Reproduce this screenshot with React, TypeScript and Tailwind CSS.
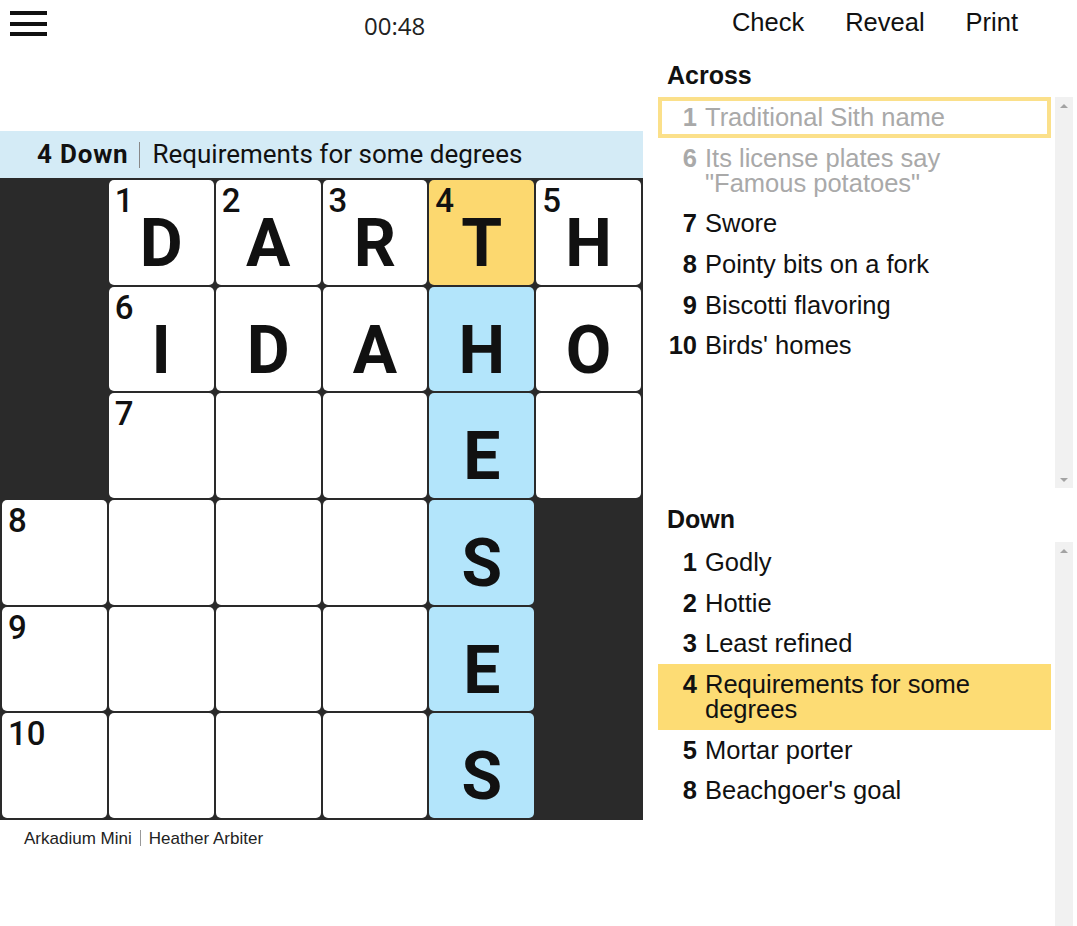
type Cell = null | { n?: number; l?: string; hl?: "y" | "b" };

const GRID: Cell[][] = [
  [null, { n: 1, l: "D" }, { n: 2, l: "A" }, { n: 3, l: "R" }, { n: 4, l: "T", hl: "y" }, { n: 5, l: "H" }],
  [null, { n: 6, l: "I" }, { l: "D" }, { l: "A" }, { l: "H", hl: "b" }, { l: "O" }],
  [null, { n: 7 }, {}, {}, { l: "E", hl: "b" }, {}],
  [{ n: 8 }, {}, {}, {}, { l: "S", hl: "b" }, null],
  [{ n: 9 }, {}, {}, {}, { l: "E", hl: "b" }, null],
  [{ n: 10 }, {}, {}, {}, { l: "S", hl: "b" }, null],
];

interface Clue {
  n: number;
  text: string;
  done?: boolean;
  active?: boolean;
  current?: boolean;
}

const ACROSS: Clue[] = [
  { n: 1, text: "Traditional Sith name", done: true, active: true },
  { n: 6, text: 'Its license plates say "Famous potatoes"', done: true },
  { n: 7, text: "Swore" },
  { n: 8, text: "Pointy bits on a fork" },
  { n: 9, text: "Biscotti flavoring" },
  { n: 10, text: "Birds' homes" },
];

const DOWN: Clue[] = [
  { n: 1, text: "Godly" },
  { n: 2, text: "Hottie" },
  { n: 3, text: "Least refined" },
  { n: 4, text: "Requirements for some degrees", current: true },
  { n: 5, text: "Mortar porter" },
  { n: 8, text: "Beachgoer's goal" },
];

function GridCell({ cell }: { cell: Cell }) {
  if (!cell) return <div />;
  const bg = cell.hl === "y" ? "bg-[#fcd86f]" : cell.hl === "b" ? "bg-[#b3e5fb]" : "bg-white";
  return (
    <div className={`relative rounded-[5px] ${bg} text-[#111]`}>
      {cell.n && (
        <span className="absolute left-[6px] top-[4px] text-[33px] font-medium leading-none">{cell.n}</span>
      )}
      {cell.l && (
        <div className="flex justify-center pt-[31px] text-[66px] font-bold leading-none">{cell.l}</div>
      )}
    </div>
  );
}

function ScrollTrack({ bottomArrow = true }: { bottomArrow?: boolean }) {
  return (
    <div className="ml-[4px] flex w-[18px] flex-col justify-between bg-[#f1f1f1]">
      <div className="flex h-[17px] items-center justify-center">
        <div className="h-0 w-0 border-x-[4px] border-b-[4px] border-x-transparent border-b-[#a3a3a3]" />
      </div>
      {bottomArrow && (
        <div className="flex h-[17px] items-center justify-center">
          <div className="h-0 w-0 border-x-[4px] border-t-[4px] border-x-transparent border-t-[#a3a3a3]" />
        </div>
      )}
    </div>
  );
}

function ClueItem({ clue }: { clue: Clue }) {
  const border = clue.active ? "border-[#fbe08a]" : "border-transparent";
  const bg = clue.current ? "bg-[#fddc74]" : "";
  const color = clue.done ? "text-[#a9a9a9]" : "text-[#111]";
  return (
    <li className={`flex gap-[8px] border-[4px] py-[3.85px] text-[25.5px] leading-[25px] ${border} ${bg} ${color}`}>
      <span className="w-[35px] shrink-0 text-right font-bold">{clue.n}</span>
      <span className="pr-[30px]">{clue.text}</span>
    </li>
  );
}

export default function App() {
  return (
    <div className="flex h-[926px] w-[1077px] overflow-hidden bg-white font-['Liberation_Sans',Arial,sans-serif]">
      {/* left: timer, current clue, grid */}
      <div className="flex w-[643px] shrink-0 flex-col">
        <div className="flex h-[131px] shrink-0 items-start">
          <div className="ml-[10px] mt-[11px] flex w-[37px] flex-col gap-[6.5px]">
            <div className="h-[4px] bg-[#111]" />
            <div className="h-[4px] bg-[#111]" />
            <div className="h-[4px] bg-[#111]" />
          </div>
          <div className="ml-[317px] mt-[14px] font-['Open_Sans',sans-serif] text-[24px] leading-none text-[#222]">
            00:48
          </div>
        </div>

        <div className="flex h-[47px] shrink-0 items-center bg-[#d4ebf6] pl-[37px] font-['Roboto',sans-serif] text-[26px] text-[#111]">
          <span className="font-bold tracking-[0.8px]">4 Down</span>
          <span className="ml-[11px] mr-[12px] h-[26px] w-px bg-[#888]" />
          <span>Requirements for some degrees</span>
        </div>

        <div className="grid h-[642px] w-[643px] shrink-0 grid-cols-6 grid-rows-6 gap-[2px] bg-[#2a2a2a] p-[2px] font-['Roboto',sans-serif]">
          {GRID.flatMap((row, r) => row.map((cell, c) => <GridCell key={`${r}-${c}`} cell={cell} />))}
        </div>

        <div className="flex items-center pl-[24px] pt-[9.5px] text-[17px] leading-none text-[#222]">
          <span>Arkadium Mini</span>
          <span className="mx-[8px] h-[16px] w-px bg-[#999]" />
          <span>Heather Arbiter</span>
        </div>
      </div>

      {/* right: actions and clue lists */}
      <div className="flex flex-1 flex-col pl-[15px] pr-[4px]">
        <div className="flex h-[63px] shrink-0 justify-end gap-[41px] pr-[55px] pt-[10px] text-[25.5px] leading-none text-[#111]">
          <span>Check</span>
          <span>Reveal</span>
          <span>Print</span>
        </div>

        <h2 className="h-[34px] shrink-0 pl-[9px] text-[25px] font-bold leading-none text-[#111]">Across</h2>
        <div className="flex h-[391px] shrink-0">
          <ul className="w-[393px]">
            {ACROSS.map((c) => (
              <ClueItem key={c.n} clue={c} />
            ))}
          </ul>
          <ScrollTrack />
        </div>

        <h2 className="h-[54px] shrink-0 pl-[9px] pt-[19px] text-[25px] font-bold leading-none text-[#111]">Down</h2>
        <div className="flex h-[400px] shrink-0">
          <ul className="w-[393px]">
            {DOWN.map((c) => (
              <ClueItem key={c.n} clue={c} />
            ))}
          </ul>
          <ScrollTrack />
        </div>
      </div>
    </div>
  );
}
